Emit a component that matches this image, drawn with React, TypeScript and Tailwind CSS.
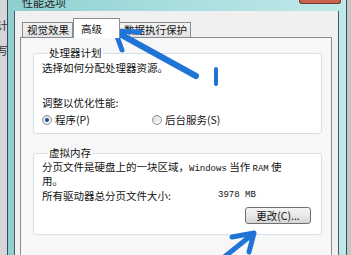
import React from "react";

const cjk = { fontFamily: '"Noto Sans CJK SC", "Noto Sans", sans-serif' };
const mono = { fontFamily: '"Liberation Mono", monospace' };

function Radio({ checked, label }: { checked?: boolean; label: string }) {
  return (
    <div className="flex items-center gap-[3px]">
      <span className="flex h-[10px] w-[10px] items-center justify-center rounded-full border border-[#8e8f8f] bg-gradient-to-br from-[#dcdcdc] to-[#fbfbfb]">
        {checked && <span className="h-[4px] w-[4px] rounded-full bg-[#1d4e7d]" />}
      </span>
      <span>{label}</span>
    </div>
  );
}

function GroupBox({ title, children, className }: { title: string; children: React.ReactNode; className?: string }) {
  return (
    <fieldset className={`rounded-[3px] border border-[#d5dfe5] bg-white ${className ?? ""}`}>
      <legend className="ml-[6px] px-[1px] leading-[12px]">{title}</legend>
      {children}
    </fieldset>
  );
}

export default function App() {
  return (
    <div
      className="relative flex h-[255px] w-[351px] overflow-hidden bg-[#c9cbcc] text-[10.5px] leading-[13px] text-[#111]"
      style={cjk}
    >
      {/* window behind */}
      <div className="flex w-[7px] shrink-0 flex-col overflow-hidden bg-[#d4d6d7] text-[11px] text-[#333]">
        <span className="-ml-[3px] mt-[19px] w-[10px]">计</span>
        <span className="-ml-[3px] mt-[12px] w-[10px]">写</span>
      </div>

      {/* dialog frame */}
      <div className="flex w-[340px] shrink-0 flex-col border-x border-[#3b4c52] bg-gradient-to-r from-[#8fcfcf] via-[#a9dede] to-[#bfe9ea]">
        <div className="flex h-[11px] shrink-0 items-start overflow-hidden">
          <span className="ml-[14px] -mt-[4px] text-[11px] leading-[12px] text-[#222]">性能选项</span>
          <span className="ml-auto mr-[5px] h-[4px] w-[42px] rounded-b-[3px] border border-t-0 border-[#6b3a2c] bg-[#c9654a]" />
        </div>

        <div className="ml-[6px] mr-[7px] min-h-0 flex-1 overflow-hidden border-x border-[#4a5a60] bg-[#f0f0f0] pl-[5px] pr-[6px] pt-[7px]">
          {/* tabs */}
          <div className="flex items-end pl-[2px]">
            <div className="h-[15px] w-[51px] border border-b-0 border-[#898c95] bg-gradient-to-b from-[#f3f3f3] to-[#e2e2e2] pl-[4px] leading-[14px]">
              视觉效果
            </div>
            <div className="relative z-10 -mb-[1px] h-[20px] w-[47px] border border-b-0 border-[#898c95] bg-white pl-[7px] pt-[3px] leading-[14px]">
              高级
            </div>
            <div className="h-[15px] w-[71px] border border-b-0 border-l-0 border-[#898c95] bg-gradient-to-b from-[#f3f3f3] to-[#e2e2e2] pl-[4px] leading-[14px]">
              数据执行保护
            </div>
          </div>

          {/* panel */}
          <div className="h-[240px] border border-[#898c95] bg-[#f7f7f7] pl-[12px] pr-[9px] pt-[9px]">
            <GroupBox title="处理器计划" className="h-[87px] pl-[8px]">
              <div className="mt-[2px]">选择如何分配处理器资源。</div>
              <div className="mt-[22px]">调整以优化性能:</div>
              <div className="mt-[4px] flex">
                <div className="w-[110px]">
                  <Radio checked label="程序(P)" />
                </div>
                <Radio label="后台服务(S)" />
              </div>
            </GroupBox>

            <GroupBox title="虚拟内存" className="mt-[13px] h-[88px] pl-[8px]">
              <div className="mt-[2px] whitespace-nowrap leading-[12px]">
                分页文件是硬盘上的一块区域，
                <span className="text-[9px]" style={mono}>
                  Windows
                </span>{" "}
                当作{" "}
                <span className="text-[9px]" style={mono}>
                  RAM
                </span>{" "}
                使
                <br />
                用。
              </div>
              <div className="mt-[2px] flex">
                <span className="w-[176px]">所有驱动器总分页文件大小:</span>
                <span className="text-[9px]" style={mono}>
                  3978 MB
                </span>
              </div>
              <div className="mt-[5px] flex justify-end pr-[10px]">
                <button className="h-[17px] w-[66px] rounded-[3px] border border-[#707070] bg-gradient-to-b from-[#f4f4f4] via-[#e8e8e8] to-[#d6d6d6] leading-[14px]">
                  更改(C)...
                </button>
              </div>
            </GroupBox>
          </div>
        </div>
      </div>

      <div className="w-[4px] shrink-0 bg-[#c3c5c6]" />

      {/* hand-drawn annotations */}
      <svg className="pointer-events-none absolute inset-0" width="351" height="255">
        <g stroke="#1f74d6" strokeLinecap="round" strokeLinejoin="round" fill="none">
          <path d="M196 76 L118 33" strokeWidth="6" />
          <path d="M115 31 L140 32 M115 31 L122 50" strokeWidth="5" />
          <path d="M216 69 L216 84" strokeWidth="4" />
          <path d="M223 258 L253 234 M254 233 L232 237 M254 233 L249 252" strokeWidth="5" />
        </g>
      </svg>
    </div>
  );
}
